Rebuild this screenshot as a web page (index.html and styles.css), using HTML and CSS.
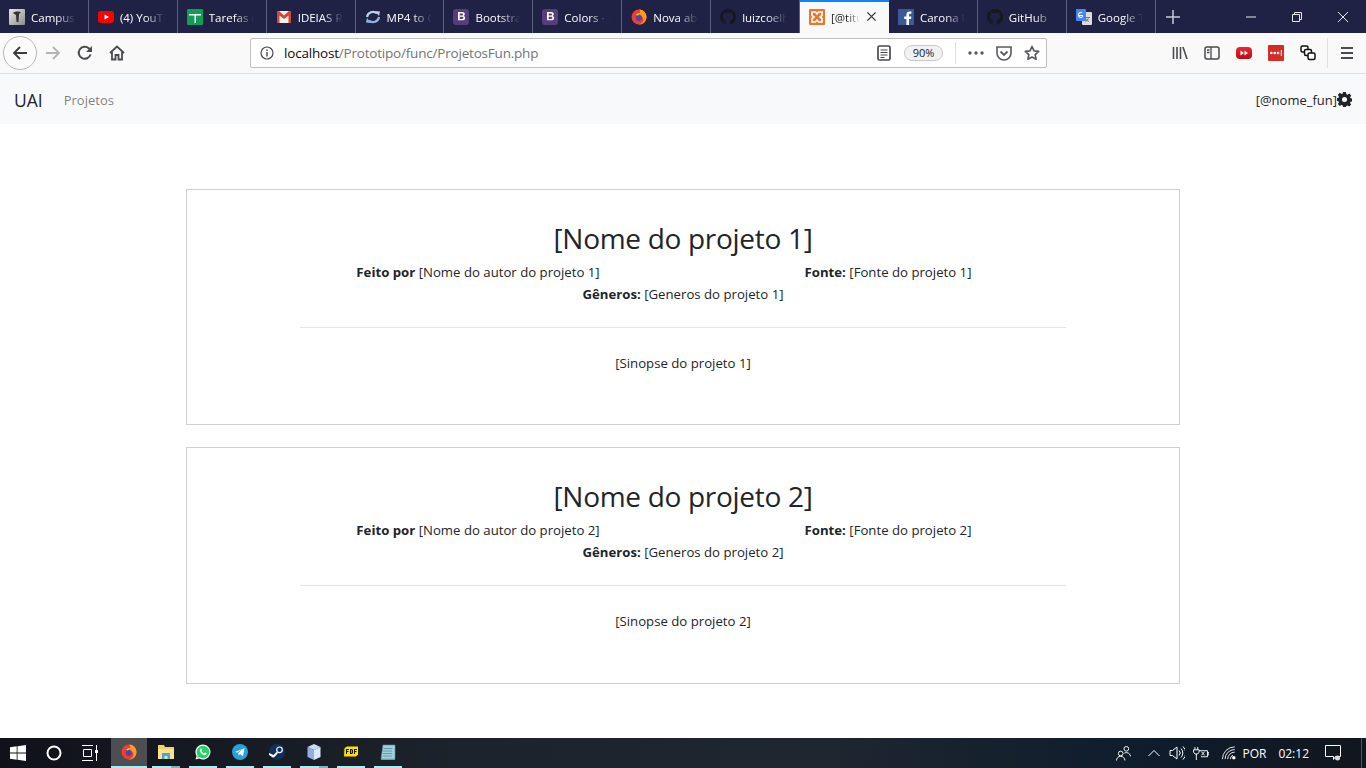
FILE: index.html
```html
<!DOCTYPE html>
<html lang="pt-BR">
<head>
    <meta charset="UTF-8">
    <title>[@titulo]</title>
    <link rel="stylesheet" href="styles.css">
</head>
<body>
    <svg class="defs" width="0" height="0">
        <defs>
            <linearGradient id="gray-icon" x1="0" y1="0" x2="1" y2="1"><stop offset="0" stop-color="#e8e8e8"/><stop offset="1" stop-color="#8c8c8c"/></linearGradient>
            <linearGradient id="red-icon" x1="0" y1="0" x2="0" y2="1"><stop offset="0" stop-color="#f0262c"/><stop offset="1" stop-color="#b50d14"/></linearGradient>
        </defs>
        <symbol id="gh" viewBox="0 0 16 16"><path fill="#16181d" d="M8 0a8 8 0 0 0-2.500 15.600c.4.100.5-.2.5-.4v-1.400c-2.200.5-2.700-1-2.700-1-.4-.9-.9-1.200-.9-1.200-.7-.5.100-.5.100-.5.800.100 1.200.8 1.200.8.700 1.200 1.900.9 2.300.7.100-.5.300-.9.500-1.100-1.800-.2-3.600-.9-3.600-4 0-.9.300-1.600.800-2.100-.1-.2-.4-1 .100-2.100 0 0 .700-.2 2.200.8a7.600 7.600 0 0 1 4 0c1.500-1 2.200-.8 2.200-.8.400 1.100.200 1.900.100 2.100.500.500.800 1.200.800 2.100 0 3.100-1.900 3.800-3.700 4 .3.300.600.700.600 1.500v2.200c0 .2.100.5.600.4A8 8 0 0 0 8 0z"/></symbol>
        <symbol id="bs" viewBox="0 0 16 16"><rect width="16" height="16" rx="3" fill="#563d7c"/><path fill="#fff" fill-rule="evenodd" d="M5 3h4.200c1.700 0 2.600.9 2.600 2.100 0 .9-.5 1.500-1.200 1.800 1 .2 1.600 1 1.600 2 0 1.500-1.100 2.300-2.900 2.300H5zm1.700 1.400v2h2c.8 0 1.300-.4 1.300-1s-.5-1-1.300-1zm0 3.300v2.200h2.300c.9 0 1.400-.4 1.400-1.100s-.5-1.100-1.400-1.100z"/></symbol>
        <symbol id="ff" viewBox="0 0 16 16"><circle cx="8" cy="8" r="7.500" fill="#e8412f"/><path fill="#ff9a1f" d="M8 .5a7.500 7.500 0 0 1 7 10.200A7.500 7.500 0 0 1 7 15.400c3.500 0 5.800-2.400 5.300-5.400C11.800 7.200 9.500 6 8 6.500 9 4 10 2 8 .5z"/><circle cx="7.800" cy="8.800" r="3.100" fill="#5b3fa8"/><path fill="#ffcf2e" d="M5 6c1-1.500 3-2 4.500-1.500C8.200 5 7.400 5.700 7 6.500z"/></symbol>
    </svg>

    <div class="tabstrip">
        <div class="tab">
            <svg class="favicon" viewBox="0 0 16 16"><rect width="16" height="16" rx="1" fill="url(#gray-icon)"/><path fill="#333" d="M4 4c2-2 6-2 8-.5L10 5 9.500 13H7.500L7 6z"/></svg>
            <span class="tab-title">Campus</span>
        </div>
        <div class="tab">
            <svg class="favicon" viewBox="0 0 16 16"><rect y="2" width="16" height="12" rx="3" fill="#f00"/><path fill="#fff" d="M6.500 5.500v5L11 8z"/></svg>
            <span class="tab-title">(4) YouTube</span>
        </div>
        <div class="tab">
            <svg class="favicon" viewBox="0 0 16 16"><rect width="16" height="16" rx="1" fill="#0f9d58"/><path fill="#fff" d="M2 5h12v1.500H9V14H7.500V6.500H2z"/></svg>
            <span class="tab-title">Tarefas do</span>
        </div>
        <div class="tab">
            <svg class="favicon" viewBox="0 0 16 16"><rect x="1" y="2" width="14" height="12" fill="#f1f1f1"/><path fill="#d44638" d="M1 2h2l5 4.500L13 2h2v12h-2.500V6.500L8 10 3.500 6.500V14H1z"/></svg>
            <span class="tab-title">IDEIAS Rápidas</span>
        </div>
        <div class="tab">
            <svg class="favicon" viewBox="0 0 16 16"><g fill="none" stroke-width="2.200"><path stroke="#b9d4f2" d="M2 8a6 6 0 0 1 10-3.500"/><path stroke="#8fb6e4" d="M14 8a6 6 0 0 1-10 3.500"/></g><path fill="#b9d4f2" d="M10 2l5 .5-1 4.500z"/><path fill="#8fb6e4" d="M6 14l-5-.5 1-4.500z"/></svg>
            <span class="tab-title">MP4 to GIF</span>
        </div>
        <div class="tab">
            <svg class="favicon"><use href="#bs"/></svg>
            <span class="tab-title">Bootstrap</span>
        </div>
        <div class="tab">
            <svg class="favicon"><use href="#bs"/></svg>
            <span class="tab-title">Colors · Boot</span>
        </div>
        <div class="tab">
            <svg class="favicon"><use href="#ff"/></svg>
            <span class="tab-title">Nova aba</span>
        </div>
        <div class="tab">
            <svg class="favicon"><use href="#gh"/></svg>
            <span class="tab-title">luizcoelho</span>
        </div>
        <div class="tab tab-active">
            <svg class="favicon" viewBox="0 0 16 16"><rect width="16" height="16" rx="1" fill="#e8762c"/><path fill="none" stroke="#fff" stroke-width="1.600" d="M3 3h3.500L8 5l1.500-2H13v3.500L11 8l2 1.500V13H9.500L8 11l-1.500 2H3V9.500L5 8 3 6.500z"/></svg>
            <span class="tab-title">[@titulo]</span>
            <svg class="tab-close" viewBox="0 0 12 12"><path stroke="#3c3c3c" stroke-width="1.500" d="M1.500 1.500l9 9M10.500 1.500l-9 9"/></svg>
        </div>
        <div class="tab">
            <svg class="favicon" viewBox="0 0 16 16"><rect width="16" height="16" fill="#3b5998"/><path fill="#fff" d="M11 16V10h2l.4-2.500H11V6c0-.8.300-1.200 1.200-1.200h1.200V2.600C13 2.500 12.300 2.500 11.500 2.500 9.600 2.500 8.400 3.600 8.400 5.700v1.800H6.200V10h2.200v6z"/></svg>
            <span class="tab-title">Carona UAI</span>
        </div>
        <div class="tab">
            <svg class="favicon"><use href="#gh"/></svg>
            <span class="tab-title">GitHub</span>
        </div>
        <div class="tab">
            <svg class="favicon" viewBox="0 0 16 16"><rect x="6" y="3" width="10" height="13" rx="1" fill="#ddd"/><rect width="10" height="12" rx="1" fill="#4285f4"/><path fill="#fff" d="M3 6h4v.800c0 1.500-1 2.200-2 2.200a3 3 0 0 1 0-6c.6 0 1.200.2 1.600.6l-.6.600C5.700 4 5.400 3.900 5 3.900a2 2 0 0 0 0 4c.7 0 1.100-.3 1.200-1H3z"/><path fill="#777" d="M9 8h5v1h-1.200c-.2 1-.6 1.700-1 2.200l1.500 1.300-.6.600-1.500-1.300-1.500 1.300-.6-.6 1.600-1.400c-.4-.5-.6-1-.8-1.400h1c.1.300.3.600.5.800.3-.4.500-.9.600-1.500H9z"/></svg>
            <span class="tab-title">Google Tradutor</span>
        </div>
        <svg class="new-tab" viewBox="0 0 14 14"><path stroke="#c9cbd6" stroke-width="1.500" d="M7 0v14M0 7h14"/></svg>
        <div class="window-controls">
            <svg viewBox="0 0 10 10"><path stroke="#e8e8ee" d="M0 5h10"/></svg>
            <svg viewBox="0 0 10 10"><path fill="none" stroke="#e8e8ee" d="M.5 2.500h7v7h-7zM2.500 2.500v-2h7v7h-2"/></svg>
            <svg viewBox="0 0 10 10"><path stroke="#e8e8ee" d="M0 0l10 10M10 0L0 10"/></svg>
        </div>
    </div>

    <div class="toolbar">
        <div class="nav-buttons">
            <div class="back-button">
                <svg viewBox="0 0 16 16"><path fill="none" stroke="#3c3c3e" stroke-width="1.800" d="M15 8H2M8 2L2 8l6 6"/></svg>
            </div>
            <svg class="nav-icon" viewBox="0 0 16 16"><path fill="none" stroke="#b4b4b5" stroke-width="1.800" d="M1 8h13M8 2l6 6-6 6"/></svg>
            <svg class="nav-icon" viewBox="0 0 16 16"><path fill="none" stroke="#4a4a4f" stroke-width="2" d="M13.500 9.500A6 6 0 1 1 12 3.500l2 2"/><path fill="#4a4a4f" d="M15 1v6H9z"/></svg>
            <svg class="nav-icon" viewBox="0 0 16 16"><path fill="none" stroke="#4a4a4f" stroke-width="1.800" d="M1 8l7-6.500L15 8M3 7v7.500h3.500V10h3v4.500H13V7"/></svg>
        </div>
        <div class="urlbar">
            <svg class="url-info" viewBox="0 0 14 14"><circle cx="7" cy="7" r="6" fill="none" stroke="#4a4a4f" stroke-width="1.200"/><path fill="#4a4a4f" d="M6.300 6h1.400v4.500H6.300zM6.300 3.500h1.400v1.400H6.300z"/></svg>
            <span class="url-text"><span class="url-host">localhost</span>/Prototipo/func/ProjetosFun.php</span>
            <svg class="url-reader" viewBox="0 0 14 16"><rect x="1" y="1" width="12" height="14" rx="1.500" fill="none" stroke="#4a4a4f" stroke-width="1.700"/><path stroke="#4a4a4f" d="M3.500 5h7M3.500 7.500h7M3.500 10h7M3.500 12.500h4"/></svg>
            <span class="url-zoom">90%</span>
            <span class="url-sep"></span>
            <svg class="url-more" viewBox="0 0 16 4"><g fill="#5a5a5f"><circle cx="2" cy="2" r="1.700"/><circle cx="8" cy="2" r="1.700"/><circle cx="14" cy="2" r="1.700"/></g></svg>
            <svg class="url-pocket" viewBox="0 0 16 16"><path fill="none" stroke="#5a5a5f" stroke-width="1.600" d="M1 2h14v6a7 7 0 0 1-14 0z"/><path fill="none" stroke="#5a5a5f" stroke-width="1.800" d="M4.500 6.500L8 10l3.500-3.500"/></svg>
            <svg class="url-star" viewBox="0 0 16 16"><path fill="none" stroke="#5a5a5f" stroke-width="1.700" stroke-linejoin="round" d="M8 1.500l2 4.300 4.700.6-3.500 3.200.9 4.700L8 12l-4.100 2.300.9-4.700L1.300 6.400 6 5.800z"/></svg>
        </div>
        <div class="tool-buttons">
            <svg viewBox="0 0 16 16"><path fill="none" stroke="#4a4a4f" stroke-width="1.600" d="M1.500 2v12M5 2v12M8.500 2v12M11 2l4 12"/></svg>
            <svg viewBox="0 0 16 16"><rect x="1" y="2" width="14" height="12" rx="2" fill="none" stroke="#4a4a4f" stroke-width="1.500"/><path stroke="#4a4a4f" stroke-width="1.300" d="M7 2v12M3 5h2.500M3 7.500h2.500"/></svg>
            <svg viewBox="0 0 16 16"><rect y="2" width="16" height="12" rx="4" fill="url(#red-icon)"/><path fill="#fff" d="M4.500 5.500v5L8 8zM8.500 5.500v5L12 8z"/></svg>
            <svg viewBox="0 0 16 16"><rect width="16" height="16" rx="1" fill="#d32d27"/><g fill="#fff"><circle cx="3.300" cy="8" r="1.300"/><circle cx="6.700" cy="8" r="1.300"/><circle cx="10" cy="8" r="1.300"/><rect x="12.800" y="5" width="1" height="6"/></g></svg>
            <svg viewBox="0 0 16 16"><g fill="#fff" stroke="#111" stroke-width="1.500"><rect x="1" y="1" width="7" height="6" rx="1.500"/><rect x="4.500" y="4.500" width="7" height="6" rx="1.500"/><rect x="8" y="8" width="7" height="6.500" rx="1.500"/></g></svg>
            <span class="tool-sep"></span>
            <svg class="tool-menu" viewBox="0 0 14 14"><path stroke="#4a4a4f" stroke-width="1.800" d="M1 2h12M1 7h12M1 12h12"/></svg>
        </div>
    </div>

    <nav class="navbar">
        <a class="brand">UAI</a>
        <a class="nav-link">Projetos</a>
        <span class="nav-user">[@nome_fun]<svg class="gear" viewBox="0 0 16 16"><path fill="#212529" fill-rule="evenodd" d="M6.500 0h3l.4 2.200 1.300.6L13.100 1.500l2.100 2.100L14 5.500l.5 1.200L16 7v3l-1.600.4-.5 1.200 1.200 1.800-2.100 2.100-1.800-1.200-1.300.5L9.500 16h-3l-.4-1.700-1.300-.5L3 15l-2.100-2.100 1.200-1.800-.6-1.200L0 9.500v-3l1.600-.4.500-1.300L.9 3 3 .9l1.800 1.200 1.300-.5zM8 5.300a2.700 2.700 0 1 0 0 5.400 2.700 2.700 0 0 0 0-5.400z"/></svg></span>
    </nav>

    <main class="content">
        <section class="project-card">
            <h1 class="project-title">[Nome do projeto 1]</h1>
            <div class="project-meta">
                <p><b>Feito por</b> [Nome do autor do projeto 1]</p>
                <p><b>Fonte:</b> [Fonte do projeto 1]</p>
            </div>
            <p class="project-genres"><b>Gêneros:</b> [Generos do projeto 1]</p>
            <hr class="project-rule">
            <p class="project-synopsis">[Sinopse do projeto 1]</p>
        </section>
        <section class="project-card">
            <h1 class="project-title">[Nome do projeto 2]</h1>
            <div class="project-meta">
                <p><b>Feito por</b> [Nome do autor do projeto 2]</p>
                <p><b>Fonte:</b> [Fonte do projeto 2]</p>
            </div>
            <p class="project-genres"><b>Gêneros:</b> [Generos do projeto 2]</p>
            <hr class="project-rule">
            <p class="project-synopsis">[Sinopse do projeto 2]</p>
        </section>
    </main>

    <footer class="taskbar">
        <div class="task-system">
            <svg viewBox="0 0 16 16"><path fill="#fff" d="M0 2.300l6.700-1v6.300H0zM7.500 1.200L16 0v7.600H7.500zM0 8.400h6.700v6.300l-6.700-1zM7.500 8.400H16V16l-8.500-1.200z"/></svg>
            <svg viewBox="0 0 16 16"><circle cx="8" cy="8" r="6.500" fill="none" stroke="#fff" stroke-width="2"/></svg>
            <svg viewBox="0 0 16 16"><path fill="none" stroke="#fff" d="M0 .5h11M0 15.500h11M1.500 4.500h8v7h-8zM14.500 0v16"/><rect x="13" y="5" width="3" height="3" fill="#fff"/></svg>
        </div>
        <div class="task-slot task-slot-active"><svg><use href="#ff"/></svg></div>
        <div class="task-slot task-slot-multi">
            <svg viewBox="0 0 16 16"><path fill="#f3cf6b" d="M0 1h6l1 2h9v12H0z"/><rect y="5" width="16" height="10" fill="#fbe08e"/><path fill="#3ba9e4" d="M4 9h8v6h-2.500v-3h-3v3H4z"/></svg>
        </div>
        <div class="task-slot">
            <svg viewBox="0 0 16 16"><path fill="#fff" d="M8 .5a7.500 7.500 0 0 0-6.400 11.400L.5 15.500l3.700-1A7.500 7.500 0 1 0 8 .5z"/><path fill="#25d366" d="M8 1.700a6.300 6.300 0 0 0-5.200 9.800l-.6 2.300 2.300-.6A6.300 6.300 0 1 0 8 1.700z"/><path fill="#fff" d="M5.700 4.500c-.5.300-1 1-.9 1.900.2 1.400 1.400 3 2.800 4 1 .6 2.300 1 3.100.6.600-.3.900-.8 1-1.400l-1.800-1-.8.900c-1-.4-2-1.300-2.500-2.400l.7-.8-.8-1.800z"/></svg>
        </div>
        <div class="task-slot">
            <svg viewBox="0 0 16 16"><circle cx="8" cy="8" r="8" fill="#2a9fd8"/><path fill="#fff" d="M3 8l9.500-3.800-1.500 8-3-2.200-1.400 1.400-.3-2.500 4.200-3.700-5.300 3.300z"/></svg>
        </div>
        <div class="task-slot">
            <svg viewBox="0 0 16 16"><circle cx="8" cy="8" r="8" fill="#12305a"/><circle cx="10.500" cy="5.800" r="2.800" fill="none" stroke="#fff" stroke-width="1.200"/><path fill="#fff" d="M0 9l4.500 2 3.500-3.500 1 1.500-3 3.500a2 2 0 0 1-3.500 0L0 11z"/></svg>
        </div>
        <div class="task-slot task-slot-multi">
            <svg viewBox="0 0 16 16"><path fill="#c9dcf5" d="M8 0l6.500 3L8 6 1.500 3z"/><path fill="#8fb0de" d="M1.500 3L8 6v10l-6.500-3z"/><path fill="#dbe8f8" d="M14.500 3L8 6v10l6.500-3z"/></svg>
        </div>
        <div class="task-slot">
            <svg viewBox="0 0 16 16"><path fill="#ffe000" stroke="#222" d="M1 4l3-2h11.500v9l-3 2H.500z"/><path fill="#111" d="M3 5h3v1H4v1h1.500v1H4v2H3zM7 5h2l1 1v3l-1 1H7zm1 1v3h.7V6zM11 5h3v1h-2v1h1.500v1H12v2h-1z"/></svg>
        </div>
        <div class="task-slot">
            <svg viewBox="0 0 16 16"><path fill="#9fd2df" stroke="#5f8fa0" stroke-width=".6" d="M3 1h12v14H1z"/><path stroke="#4d7f90" stroke-width=".7" d="M3.500 4.500h9M3.200 7h9M3 9.500h9M2.800 12h9"/><path fill="#a98a66" d="M1 15h14v1H1z"/></svg>
        </div>
        <div class="tray">
            <svg class="tray-people" viewBox="0 0 16 16"><g fill="none" stroke="#fff"><circle cx="5" cy="8" r="2.500"/><path d="M.5 15.500a4.500 4.500 0 0 1 9 0"/><circle cx="11" cy="3" r="2.500"/><path d="M9 7.500a4.500 4.500 0 0 1 6.500 3.500"/></g></svg>
            <svg class="tray-caret" viewBox="0 0 12 8"><path fill="none" stroke="#fff" d="M.5 7L6 1.500 11.500 7"/></svg>
            <svg class="tray-sound" viewBox="0 0 16 16"><path fill="none" stroke="#fff" d="M1 5.500h2.500L8 2v12l-4.500-3.500H1zM10 5.500a3.500 3.500 0 0 1 0 5M12 3.500a6.500 6.500 0 0 1 0 9M14 1.500a9 9 0 0 1 0 13"/></svg>
            <svg class="tray-power" viewBox="0 0 18 14"><path fill="none" stroke="#fff" d="M3 0v3M6 0v3M1.500 3h6v2.500l-1.500 2h-3l-1.500-2zM4.500 7.500V14M7.500 4h9v6.500h-7M16.500 6h1.500v2.500h-1.500M10 5l3.500 4M13.500 5L10 9"/></svg>
            <svg class="tray-wifi" viewBox="0 0 16 16"><path fill="none" stroke="#fff" d="M.5 15a14 14 0 0 1 14-14M3.500 15a11 11 0 0 1 11-11M6.500 15a8 8 0 0 1 8-8M9.500 15a5 5 0 0 1 3-4.500"/><circle cx="13.500" cy="13.500" r="2" fill="#fff"/></svg>
            <span class="tray-lang">POR</span>
            <span class="tray-clock">02:12</span>
            <svg class="tray-notif" viewBox="0 0 16 16"><path fill="none" stroke="#fff" d="M.5.500h15v11h-5l-2 3v-3H.500z"/><circle cx="12.500" cy="13" r="2.500" fill="#ddd"/></svg>
            <span class="tray-desktop"></span>
        </div>
    </footer>
</body>
</html>
```
FILE: styles.css
```css
* {
    box-sizing: border-box;
}

html, body {
    margin: 0;
    height: 100%;
}

body {
    width: 1366px;
    height: 768px;
    overflow: hidden;
    display: flex;
    flex-direction: column;
    font-family: "Open Sans", "Noto Sans", Arial, sans-serif;
    color: #212529;
    background: white;
}

.defs {
    display: block;
    height: 0;
}

/* abas */
.tabstrip {
    display: flex;
    align-items: center;
    height: 33px;
    flex: none;
    background: #1f2244;
}

.tab {
    display: flex;
    align-items: center;
    flex: 0 0 88.9px;
    height: 33px;
    padding-left: 9px;
    border-right: 1px solid #5c5f7b;
    color: white;
    font-size: 11.5px;
}

.tab-active {
    background: #f9f9fa;
    color: #222;
    border-right: none;
    border-top: 2px solid #0a84ff;
    padding-bottom: 2px;
}

.favicon {
    flex: none;
    width: 16px;
    height: 16px;
    margin-right: 6px;
}

.tab-title {
    width: 45px;
    padding-top: 1px;
    overflow: hidden;
    white-space: nowrap;
    -webkit-mask-image: linear-gradient(to right, black 55%, transparent);
    mask-image: linear-gradient(to right, black 55%, transparent);
}

.tab-active .tab-title {
    width: 29px;
}

.tab-close {
    width: 11px;
    height: 11px;
    margin-left: 6px;
}

.new-tab {
    width: 14px;
    height: 14px;
    margin-left: 10px;
}

.window-controls {
    display: flex;
    align-items: center;
    margin-left: auto;
}

.window-controls svg {
    width: 10px;
    height: 10px;
    margin: 0 18px;
}

/* barra do navegador */
.toolbar {
    display: flex;
    align-items: center;
    height: 41px;
    flex: none;
    background: #f9f9fa;
    border-bottom: 1px solid #e0e0e1;
}

.nav-buttons {
    display: flex;
    align-items: center;
    width: 250px;
    padding-left: 3px;
}

.back-button {
    display: flex;
    align-items: center;
    justify-content: center;
    width: 34px;
    height: 34px;
    margin-right: 8px;
    background: #fbfbfb;
    border: 1px solid #b8b8b8;
    border-radius: 50%;
}

.back-button svg {
    width: 16px;
    height: 16px;
}

.nav-icon {
    width: 16px;
    height: 16px;
    margin-right: 16px;
}

.urlbar {
    display: flex;
    align-items: center;
    width: 797px;
    height: 30px;
    padding-left: 9px;
    background: white;
    border: 1px solid #bfbfbf;
    border-radius: 2px;
    font-size: 13.5px;
    letter-spacing: -0.2px;
}

.url-info {
    width: 14px;
    height: 14px;
    margin-right: 10px;
}

.url-text {
    flex: 1;
    color: #737373;
}

.url-host {
    color: #0c0c0d;
}

.url-reader {
    width: 14px;
    height: 16px;
    margin-right: 13px;
}

.url-zoom {
    width: 39px;
    height: 16px;
    margin-right: 12px;
    border: 1px solid #c8c8c8;
    border-radius: 8px;
    background: #f1f1f1;
    color: #222;
    font-size: 11px;
    letter-spacing: 0;
    line-height: 14px;
    text-align: center;
}

.url-sep {
    width: 1px;
    height: 22px;
    margin-right: 12px;
    background: #dedede;
}

.url-more {
    width: 16px;
    height: 4px;
    margin-right: 12px;
}

.url-pocket {
    width: 16px;
    height: 16px;
    margin-right: 12px;
}

.url-star {
    width: 16px;
    height: 16px;
    margin-right: 6px;
}

.tool-buttons {
    display: flex;
    align-items: center;
    flex: 1;
    padding-left: 125px;
}

.tool-buttons svg {
    width: 16px;
    height: 16px;
    margin-right: 16px;
    flex: none;
}

.tool-buttons .tool-menu {
    width: 14px;
    height: 14px;
    margin-right: 0;
}

.tool-sep {
    width: 1px;
    height: 30px;
    margin: 0 12px 0 -5px;
    background: #e0e0e1;
    flex: none;
}

/* navbar da pagina */
.navbar {
    display: flex;
    align-items: center;
    height: 50px;
    flex: none;
    padding: 1px 14px 0;
    background: #f8f9fa;
    font-size: 13px;
}

.brand {
    margin-right: 21px;
    font-size: 17.5px;
    color: #212529;
}

.nav-link {
    color: rgba(0, 0, 0, 0.5);
}

.nav-user {
    display: flex;
    align-items: center;
    margin-left: auto;
    color: #212529;
}

.gear {
    width: 15px;
    height: 15px;
}

/* projetos */
.content {
    flex: 1;
    padding-top: 65px;
}

.project-card {
    width: 994px;
    margin: 0 auto 22px;
    padding: 29px 113px 50.4px;
    border: 1px solid #cfcfcf;
    text-align: center;
    font-size: 13.2px;
    line-height: 22px;
}

.project-card p {
    margin: 0;
}

.project-title {
    margin: 0 0 3px;
    font-size: 28px;
    font-weight: 400;
    letter-spacing: -0.3px;
    line-height: 39px;
}

.project-meta {
    display: grid;
    grid-template-columns: 410px 410px;
    justify-content: center;
}

.project-rule {
    margin: 22px 0 24px;
    border: 0;
    border-top: 1px solid #e5e5e5;
}

/* barra de tarefas */
.taskbar {
    display: flex;
    align-items: center;
    height: 30px;
    flex: none;
    background: linear-gradient(to right, #10121a, #1d232c 35%, #1e2630 60%, #0e1c2c 85%, #12161e);
    color: white;
}

.task-system {
    display: flex;
    align-items: center;
    flex: none;
    width: 111px;
    padding-left: 10px;
}

.task-system svg {
    flex: none;
    width: 16px;
    height: 16px;
    margin-right: 20px;
}

.task-system svg:last-child {
    margin-right: 0;
}

.task-slot {
    display: flex;
    align-items: center;
    justify-content: center;
    width: 28px;
    height: 30px;
    margin-right: 9px;
    border-bottom: 2px solid #a5eef5;
}

.task-slot svg {
    width: 16px;
    height: 16px;
}

.task-slot-active {
    width: 36px;
    margin-right: 5px;
    background: #4c4e52;
}

.task-slot-multi {
    border-image: linear-gradient(to right, #a5eef5 68%, #7fb4ba 68%) 1;
}

.tray {
    display: flex;
    align-items: center;
    margin-left: auto;
    font-size: 12px;
}

.tray svg {
    flex: none;
}

.tray-people {
    width: 15px;
    height: 15px;
    margin-right: 17px;
}

.tray-caret {
    width: 12px;
    height: 8px;
    margin-right: 9px;
}

.tray-sound {
    width: 16px;
    height: 16px;
    margin-right: 7px;
}

.tray-power {
    width: 17px;
    height: 13px;
    margin-right: 13px;
}

.tray-wifi {
    width: 14px;
    height: 14px;
    margin-right: 6px;
}

.tray-lang {
    margin-right: 12px;
}

.tray-clock {
    margin-right: 16px;
}

.tray-notif {
    width: 16px;
    height: 16px;
    margin-right: 20px;
}

.tray-desktop {
    width: 1px;
    height: 30px;
    margin-right: 4px;
    background: #555;
}
```
